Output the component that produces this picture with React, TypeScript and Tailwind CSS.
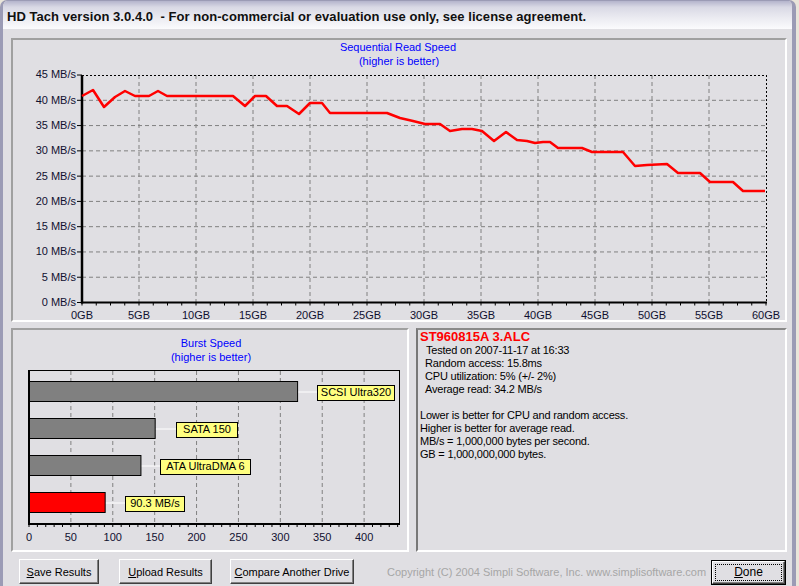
import React from "react";

const FONT = "'Liberation Sans', Arial, sans-serif";

// ---------- sequential read chart (page coordinates) ----------
const X0 = 82;
const X1 = 766;
const Y0 = 75;
const Y1 = 302.5;
const gbX = (i: number) => X0 + i * 57;
const mbY = (v: number) => Y1 - v * 5.055;

const readPoints: [number, number][] = [
  [82, 96], [93, 90], [104, 107], [115, 97], [125, 91], [135, 96], [149, 96],
  [158, 91], [167, 96], [233, 96], [245, 106], [255, 96], [266, 96], [277, 106],
  [287, 106], [299, 114], [310, 103], [322, 103], [330, 113], [387, 113],
  [400, 118], [413, 121], [425, 124], [440, 124], [450, 131], [462, 129],
  [472, 129], [482, 131], [494, 141], [506, 132], [517, 140], [527, 141],
  [535, 143], [543, 142], [550, 142], [558, 148], [582, 148], [592, 152],
  [623, 152], [635, 166], [647, 165], [667, 164], [678, 173], [700, 173],
  [710, 182], [733, 182], [743, 191], [765, 191],
];

function ReadChart() {
  const mbs = [45, 40, 35, 30, 25, 20, 15, 10, 5, 0];
  const gbs = Array.from({ length: 13 }, (_, i) => i);
  const minor = Array.from({ length: 49 }, (_, i) => X0 + i * 14.25);
  return (
    <svg width="772" height="280" className="block" style={{ fontFamily: FONT }}>
      <g transform="translate(-13,-40)">
        <text x="398" y="48" fontSize="11" fill="#0000ff" textAnchor="middle" dominantBaseline="middle">
          Sequential Read Speed
        </text>
        <text x="399" y="62" fontSize="11" fill="#0000ff" textAnchor="middle" dominantBaseline="middle">
          (higher is better)
        </text>

        {gbs.slice(1, 12).map((i) => (
          <line key={"v" + i} x1={gbX(i)} y1={Y0} x2={gbX(i)} y2={Y1} stroke="#808080" strokeDasharray="4 3" />
        ))}
        {mbs.slice(1, 9).map((v) => (
          <line key={"h" + v} x1={X0} y1={mbY(v)} x2={X1} y2={mbY(v)} stroke="#808080" strokeDasharray="4 3" />
        ))}
        <line x1={X0} y1={Y0 + 0.5} x2={X1} y2={Y0 + 0.5} stroke="#000" strokeDasharray="2 2" />
        <line x1={X1 + 0.5} y1={Y0} x2={X1 + 0.5} y2={Y1} stroke="#000" strokeDasharray="2 2" />

        {mbs.map((v) => (
          <g key={"y" + v}>
            <line x1="77" y1={mbY(v)} x2={X0} y2={mbY(v)} stroke="#000" />
            <text x="76" y={mbY(v) + 0.5} fontSize="11" fill="#101030" textAnchor="end" dominantBaseline="middle">
              {v} MB/s
            </text>
          </g>
        ))}
        {minor.map((x, i) => (
          <line key={"m" + i} x1={x} y1={Y1} x2={x} y2={Y1 + 3} stroke="#000" />
        ))}
        {gbs.map((i) => (
          <text key={"x" + i} x={gbX(i)} y="316" fontSize="11" fill="#101030" textAnchor="middle" dominantBaseline="middle">
            {i * 5}GB
          </text>
        ))}

        <line x1={X0} y1={Y0} x2={X0} y2={Y1 + 1} stroke="#000" strokeWidth="2.5" />
        <line x1={X0 - 1} y1={Y1} x2={X1 + 1} y2={Y1} stroke="#000" strokeWidth="2" />

        <polyline
          points={readPoints.map((p) => p.join(",")).join(" ")}
          fill="none"
          stroke="#ff0000"
          strokeWidth="2.5"
          strokeLinejoin="round"
        />
      </g>
    </svg>
  );
}

// ---------- burst speed chart ----------
const BX0 = 29;
const bx = (v: number) => BX0 + v * 0.8378;

const bursts = [
  { value: 320, y: 381, fill: "#808080", label: "SCSI Ultra320", lx: 317, lw: 77 },
  { value: 150, y: 418, fill: "#808080", label: "SATA 150", lx: 176, lw: 61 },
  { value: 133, y: 455, fill: "#808080", label: "ATA UltraDMA 6", lx: 160, lw: 90 },
  { value: 90.3, y: 492, fill: "#ff0000", label: "90.3 MB/s", lx: 125, lw: 59 },
];

function BurstChart() {
  const ticks = [0, 50, 100, 150, 200, 250, 300, 350, 400];
  const minor = Array.from({ length: 45 }, (_, i) => i * 10);
  return (
    <svg width="394" height="220" className="block" style={{ fontFamily: FONT }}>
      <g transform="translate(-13,-330)">
        <text x="211" y="344" fontSize="11" fill="#0000ff" textAnchor="middle" dominantBaseline="middle">
          Burst Speed
        </text>
        <text x="211" y="358" fontSize="11" fill="#0000ff" textAnchor="middle" dominantBaseline="middle">
          (higher is better)
        </text>

        {ticks.slice(1).map((v) => (
          <line key={"g" + v} x1={bx(v)} y1="371" x2={bx(v)} y2="524" stroke="#808080" strokeDasharray="4 3" />
        ))}
        <line x1={BX0} y1="370.5" x2="400" y2="370.5" stroke="#000" />
        <line x1="399.5" y1="370" x2="399.5" y2="524" stroke="#000" />

        {bursts.map((b) => (
          <g key={b.label}>
            <line x1={bx(b.value)} y1={b.y + 11} x2={b.lx} y2={b.y + 11} stroke="#ffffff" />
            <rect x={BX0 + 0.5} y={b.y + 0.5} width={bx(b.value) - BX0} height="20" fill={b.fill} stroke="#000" />
            <rect x={b.lx + 0.5} y={b.y + 4.5} width={b.lw} height="15" fill="#ffff80" stroke="#000" />
            <text x={b.lx + 0.5 + b.lw / 2} y={b.y + 12.5} fontSize="11" fill="#000" textAnchor="middle" dominantBaseline="middle">
              {b.label}
            </text>
          </g>
        ))}

        {minor.map((v) => (
          <line key={"m" + v} x1={bx(v)} y1="524" x2={bx(v)} y2="527" stroke="#000" />
        ))}
        {ticks.map((v) => (
          <text key={"t" + v} x={bx(v)} y="538" fontSize="11" fill="#101030" textAnchor="middle" dominantBaseline="middle">
            {v}
          </text>
        ))}

        <line x1={BX0} y1="370" x2={BX0} y2="525" stroke="#000" strokeWidth="2" />
        <line x1={BX0 - 1} y1="524" x2="400" y2="524" stroke="#000" strokeWidth="2" />
      </g>
    </svg>
  );
}

// ---------- buttons ----------
function Label({ mnemonic, rest }: { mnemonic: string; rest: string }) {
  return (
    <span className="whitespace-nowrap">
      <span className="underline">{mnemonic}</span>
      {rest}
    </span>
  );
}

function WinButton({ mnemonic, rest, width, isDefault }: { mnemonic: string; rest: string; width: string; isDefault?: boolean }) {
  if (isDefault) {
    return (
      <button className={`${width} h-[25px] border border-black bg-[#e0dfe3] p-0`}>
        <div className="w-full h-full border-t border-l border-white border-r border-b border-r-[#404040] border-b-[#404040] shadow-[inset_-1px_-1px_0_#808080] p-[2px]">
          <div className="w-full h-full border border-dotted border-black flex items-center justify-center text-[12px] text-black">
            <Label mnemonic={mnemonic} rest={rest} />
          </div>
        </div>
      </button>
    );
  }
  return (
    <button
      className={`${width} h-[25px] bg-[#e0dfe3] border-t border-l border-white border-r border-b border-r-[#404040] border-b-[#404040] shadow-[inset_-1px_-1px_0_#808080] flex items-center justify-center text-[11px] text-black`}
    >
      <Label mnemonic={mnemonic} rest={rest} />
    </button>
  );
}

export default function App() {
  return (
    <div className="w-[799px] h-[586px] bg-[#e9e5da] overflow-hidden" style={{ fontFamily: FONT }}>
      <div className="w-[796px] h-[586px] flex flex-col rounded-t-[7px] overflow-hidden border-t border-l-[3px] border-r-[4px] border-[#9b9bb5]">
        {/* title bar */}
        <div className="h-[28px] shrink-0 flex items-center pl-[4px] pt-[3px] bg-[linear-gradient(to_bottom,#b4b4cc_0%,#d9d9e5_22%,#ebebf1_60%,#fbfbfd_100%)]">
          <span className="text-[13px] font-bold text-[#101010] whitespace-pre tracking-[0.05px]">
            HD Tach version 3.0.4.0  - For non-commercial or evaluation use only, see license agreement.
          </span>
        </div>

        {/* body */}
        <div className="flex-1 bg-[#e0dfe3] pt-[9px] pl-[8px] pr-[5px]">
          <div className="w-[776px] h-[284px] border-2 border-t-[#a0a0a0] border-l-[#a0a0a0] border-r-white border-b-white">
            <ReadChart />
          </div>

          <div className="flex gap-[7px] mt-[6px]">
            <div className="w-[398px] h-[224px] border-2 border-t-[#a0a0a0] border-l-[#a0a0a0] border-r-white border-b-white">
              <BurstChart />
            </div>
            <div className="w-[371px] h-[224px] border-2 border-t-[#8a8a8a] border-l-[#787878] border-r-white border-b-white pl-[2px] text-[11px] leading-[13px] tracking-[-0.2px] text-black">
              <div className="text-[13px] leading-[14px] font-bold text-[#ff0000] tracking-normal">ST960815A 3.ALC</div>
              <div className="ml-[6px]">Tested on 2007-11-17 at 16:33</div>
              <div className="ml-[5px]">Random access: 15.8ms</div>
              <div className="ml-[5px]">CPU utilization: 5% (+/- 2%)</div>
              <div className="ml-[5px]">Average read: 34.2 MB/s</div>
              <div className="h-[13px]" />
              <div>Lower is better for CPU and random access.</div>
              <div>Higher is better for average read.</div>
              <div>MB/s = 1,000,000 bytes per second.</div>
              <div>GB = 1,000,000,000 bytes.</div>
            </div>
          </div>

          {/* button row */}
          <div className="flex items-center mt-[7px] pl-[8px] pr-[1px]">
            <WinButton mnemonic="S" rest="ave Results" width="w-[80px]" />
            <div className="ml-[20px]">
              <WinButton mnemonic="U" rest="pload Results" width="w-[93px]" />
            </div>
            <div className="ml-[18px]">
              <WinButton mnemonic="C" rest="ompare Another Drive" width="w-[124px]" />
            </div>
            <div className="ml-[33px] text-[11px] text-[#a6a6a6] whitespace-nowrap">
              Copyright (C) 2004 Simpli Software, Inc. www.simplisoftware.com
            </div>
            <div className="ml-auto">
              <WinButton mnemonic="D" rest="one" width="w-[75px]" isDefault />
            </div>
          </div>
        </div>
      </div>
    </div>
  );
}
